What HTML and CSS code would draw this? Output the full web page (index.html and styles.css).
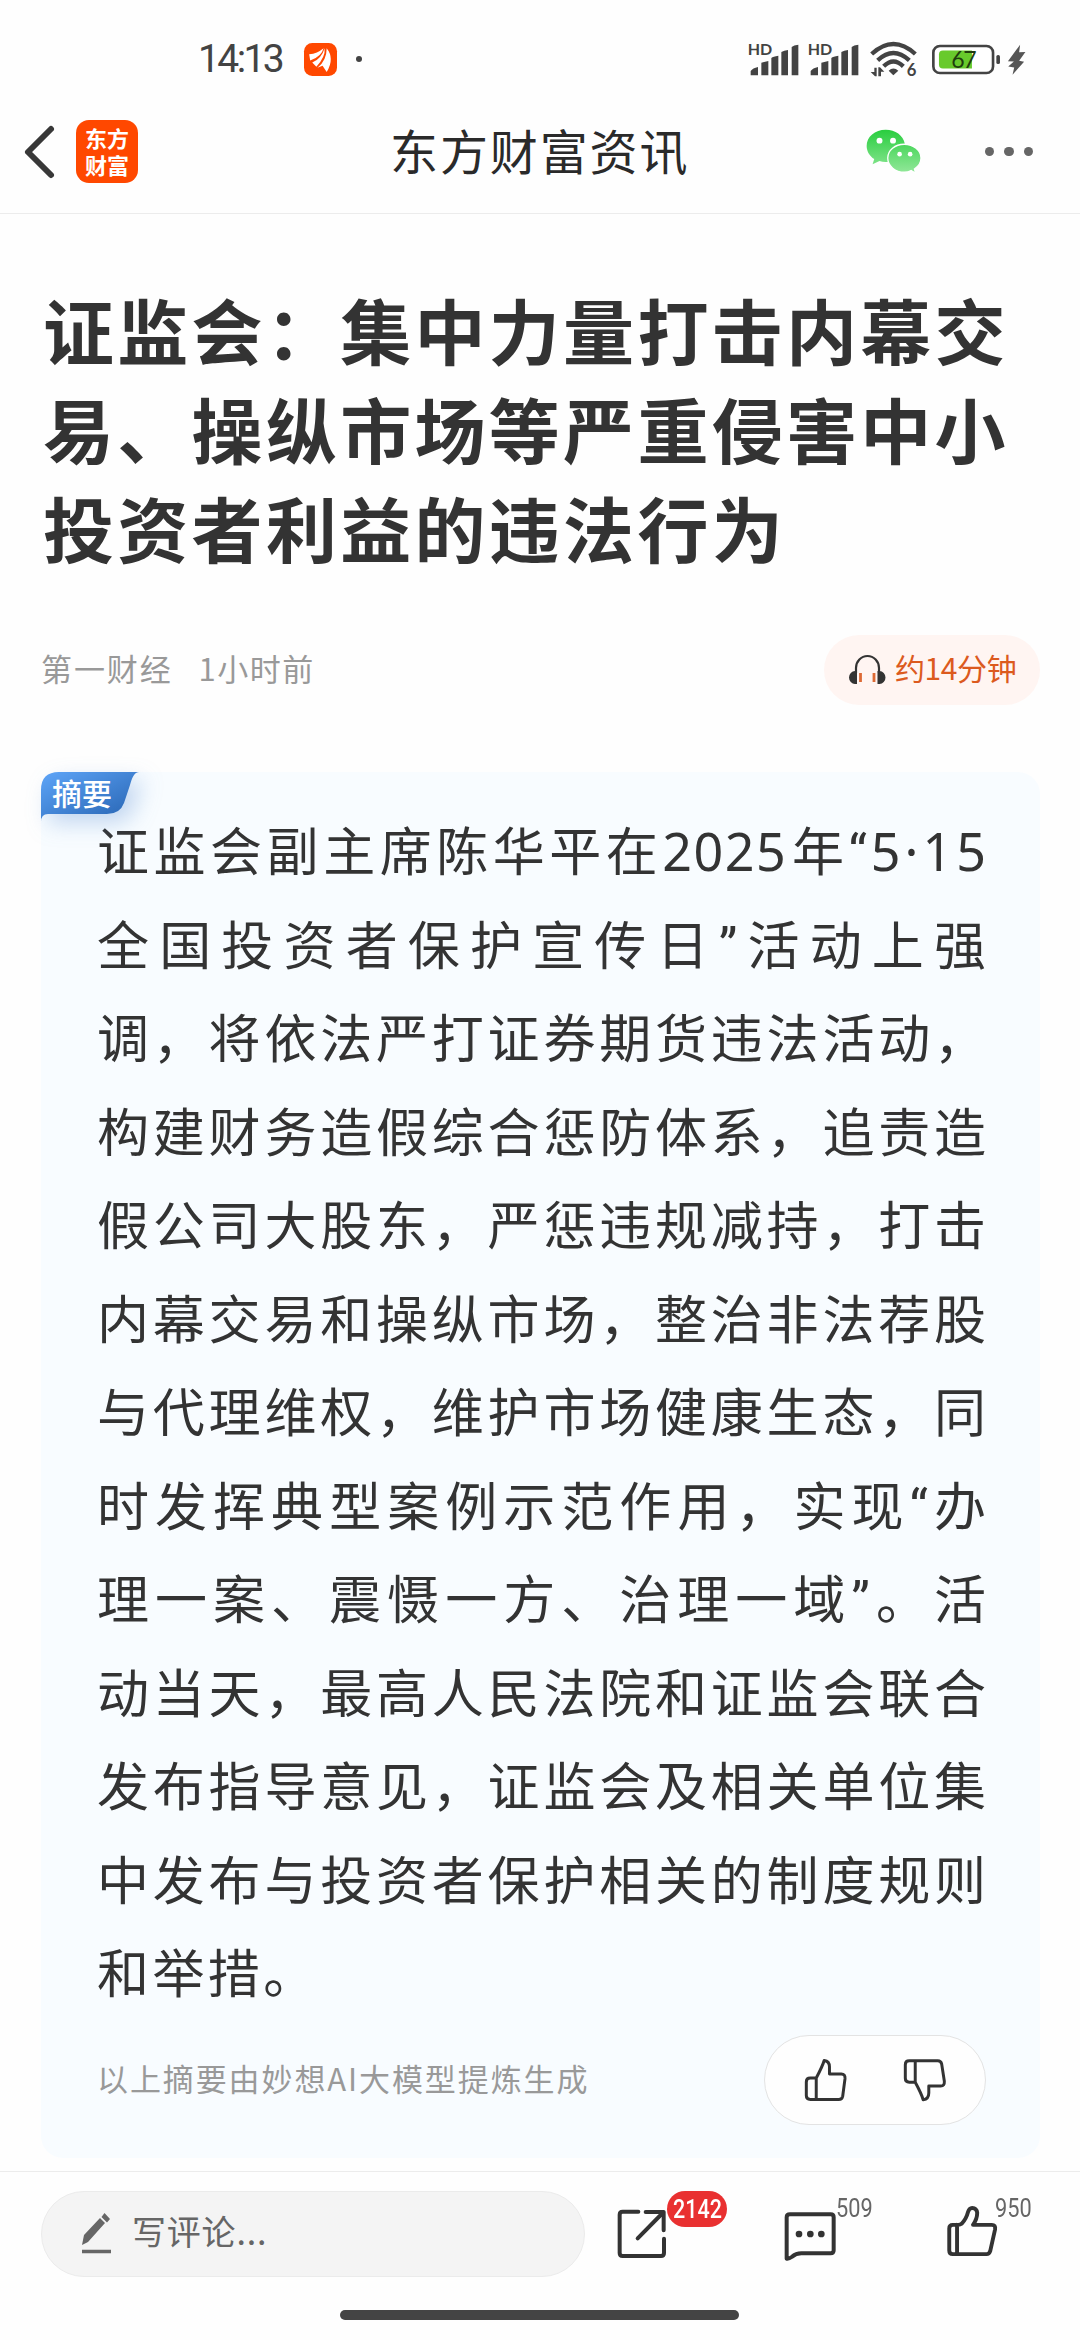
FILE: index.html
```
<!DOCTYPE html>
<html lang="zh-CN">
<head>
  <meta charset="UTF-8">
  <meta name="viewport" content="width=device-width, initial-scale=1.0">
  <title>东方财富资讯</title>
  <link rel="stylesheet" href="styles.css">
</head>
<body>
  <div class="status-bar">
    <span class="time">14:13</span>
    <svg class="app-icon" viewBox="0 0 32 32">
      <rect width="32" height="32" rx="8" fill="#ff4800"/>
      <path d="M5 11Q13 10 19 5Q17 13 6 17ZM20 5Q21 13 12 23L8 19Q17 15 20 5ZM22 5Q30 15 22 28L18 22L13 24Q22 17 22 5Z" fill="#fff"/>
    </svg>
    <span class="dot"></span>
    <div class="status-right">
      <svg class="signal" viewBox="80 65 155 105">
        <text x="79" y="105" class="hd">HD</text>
        <path d="M88 165V152Q94 143 110 140V165ZM120 165V127L141 122V165ZM150 165V113Q155 108 171 106V165ZM180 165V95Q188 90 200 89V165ZM211 165V80Q217 74 231 73V165Z"/>
      </svg>
      <svg class="signal" viewBox="80 65 155 105">
        <text x="79" y="105" class="hd">HD</text>
        <path d="M88 165V152Q94 143 110 140V165ZM120 165V127L141 122V165ZM150 165V113Q155 108 171 106V165ZM180 165V95Q188 90 200 89V165ZM211 165V80Q217 74 231 73V165Z"/>
      </svg>
      <svg class="wifi" viewBox="448 65 144 108">
        <g fill="none" stroke="#434343" stroke-width="13">
          <path d="M453 104Q518 44 584 104"/>
          <path d="M471 123Q518 79 566 123"/>
          <path d="M489 141Q518 112 548 141"/>
        </g>
        <path d="M504 154Q518 141 533 154L518 168Z"/>
        <path d="M461 145H468V171H463L450 158H461ZM473 171V144H478L491 157H481V171Z"/>
        <text x="558" y="171" class="wifi-num">6</text>
      </svg>
      <svg class="battery" viewBox="631 70 210 94">
        <rect x="637" y="76" width="181" height="82" rx="20" fill="#fff" stroke="#434343" stroke-width="8"/>
        <path d="M666 90H754V144H666Q654 144 654 132V102Q654 90 666 90Z" fill="#68ca2c"/>
        <rect x="828" y="103" width="11" height="28" rx="5"/>
        <text x="691" y="143" class="battery-num">67</text>
      </svg>
      <svg class="bolt" viewBox="860 70 56 94">
        <path d="M899 72L862 122L880 123L863 138L881 141L876 163L911 124L896 121L915 94L896 95Z" fill="#555"/>
      </svg>
    </div>
  </div>

  <header class="nav">
    <svg class="back" viewBox="0 0 30 52">
      <path d="M26 3L3 26L26 49" fill="none" stroke="#383838" stroke-width="6" stroke-linecap="round" stroke-linejoin="round"/>
    </svg>
    <div class="logo"><span>东方</span><span>财富</span></div>
    <h2 class="nav-title">东方财富资讯</h2>
    <svg class="wechat" viewBox="436 325 170 136">
      <defs>
        <linearGradient id="wx" x1="0" y1="325" x2="0" y2="460" gradientUnits="userSpaceOnUse">
          <stop offset="0" stop-color="#27cd3d"/>
          <stop offset="1" stop-color="#94e89b"/>
        </linearGradient>
      </defs>
      <path d="M496 327C463 327 438 349 438 376C438 392 447 407 461 416L456 432L477 422Q487 426 502 425L554 370C549 344 525 327 496 327Z" fill="url(#wx)"/>
      <path d="M552 371C524 371 502 389 502 413C502 437 525 456 552 456Q564 456 573 451L587 459L583 446C596 438 603 427 603 413C603 389 580 371 552 371Z" fill="url(#wx)" stroke="#fff" stroke-width="4"/>
      <g fill="#fff">
        <circle cx="477" cy="360" r="9"/><circle cx="518" cy="360" r="9"/>
        <circle cx="538" cy="401" r="7"/><circle cx="570" cy="401" r="7"/>
      </g>
    </svg>
    <div class="more"><i></i><i></i><i></i></div>
  </header>

  <main class="article">
    <h1 class="title">证监会：集中力量打击内幕交<br>易、操纵市场等严重侵害中小<br>投资者利益的违法行为</h1>

    <div class="meta">
      <span class="source">第一财经</span>
      <span class="ago">1小时前</span>
      <div class="listen">
        <svg class="headphone" viewBox="0 0 36 31">
          <path d="M7 19V14A11.5 12 0 0 1 30 14V19" fill="none" stroke="#333" stroke-width="2.2"/>
          <path d="M8 17V30H6A6 6.5 0 0 1 6 17ZM28.5 17V30H30.5A6 6.5 0 0 0 30.5 17Z" fill="#333"/>
          <path d="M11.5 19V28M25 19V28" stroke="#dd6a35" stroke-width="2.8"/>
        </svg>
        <span class="listen-text">约14分钟</span>
      </div>
    </div>

    <section class="summary">
      <div class="tag">
        <svg class="tag-bg" viewBox="0 0 98 50">
          <defs>
            <linearGradient id="tagFill" x1="0" y1="0" x2="1" y2="1">
              <stop offset="0" stop-color="#5ea5f8"/>
              <stop offset="1" stop-color="#2460ae"/>
            </linearGradient>
          </defs>
          <path d="M0 18Q0 0 18 0H98C92 1 91 7 89 13L83 31Q79 42 66 42H7Q0 42 0 50Z" fill="url(#tagFill)"/>
        </svg>
        <span class="tag-text">摘要</span>
      </div>
      <div class="summary-text">
        <p>证监会副主席陈华平在<span class="num">2025</span>年<span class="quote open">“</span><span class="num date">5·15</span></p>
        <p>全国投资者保护宣传日<span class="quote">”</span>活动上强</p>
        <p>调，将依法严打证券期货违法活动，</p>
        <p>构建财务造假综合惩防体系，追责造</p>
        <p>假公司大股东，严惩违规减持，打击</p>
        <p>内幕交易和操纵市场，整治非法荐股</p>
        <p>与代理维权，维护市场健康生态，同</p>
        <p>时发挥典型案例示范作用，实现<span class="quote">“</span>办</p>
        <p>理一案、震慑一方、治理一域<span class="quote">”</span>。活</p>
        <p>动当天，最高人民法院和证监会联合</p>
        <p>发布指导意见，证监会及相关单位集</p>
        <p>中发布与投资者保护相关的制度规则</p>
        <p class="last">和举措。</p>
      </div>
      <div class="summary-foot">
        <span class="note">以上摘要由妙想AI大模型提炼生成</span>
        <div class="vote">
          <svg class="vote-icon" viewBox="308 172 130 132">
            <path d="M345 232H327Q315 232 315 244V285Q315 297 327 297H413Q423 297 425 287L432 234Q433 220 421 220H385V198Q385 181 369 179Q364 196 345 232V297"/>
          </svg>
          <svg class="vote-icon" viewBox="605 176 130 132">
            <path d="M642 249H624Q612 249 612 237V196Q612 184 624 184H710Q720 184 722 194L730 246Q731 260 719 260H683V281Q683 299 666 302Q661 284 642 249V184"/>
          </svg>
        </div>
      </div>
    </section>
  </main>

  <footer class="toolbar">
    <div class="comment-input">
      <svg class="pencil" viewBox="0 0 30 42">
        <path d="M0 32L2 22L18 5L23 10L6 29ZM19.500 4L22.500 0L28 6L25 9.500Z" fill="#666"/>
        <path d="M0 38.500H29" stroke="#666" stroke-width="3.500"/>
      </svg>
      <span class="placeholder">写评论...</span>
    </div>
    <div class="action share">
      <svg viewBox="110 140 150 156">
        <path d="M174 154H127Q118 154 118 163V278Q118 287 127 287H242Q251 287 251 278V235M196 155H250V210M250 155L172 234"/>
      </svg>
      <span class="badge"><span class="badge-num">2142</span></span>
    </div>
    <div class="action comments">
      <svg viewBox="610 146 156 156">
        <path d="M628 162H750Q759 162 759 171V270Q759 279 750 279H662Q646 279 633 290Q625 296 618 295V171Q618 162 628 162Z"/>
        <g class="dots"><circle cx="655" cy="221" r="10"/><circle cx="689" cy="221" r="10"/><circle cx="722" cy="221" r="10"/></g>
      </svg>
      <span class="count">509</span>
    </div>
    <div class="action like">
      <svg viewBox="1096 136 156 160">
        <path d="M1128 197H1115Q1104 197 1104 208V276Q1104 287 1115 287H1219Q1227 287 1230 278L1245 211Q1247 197 1235 197H1177Q1190 180 1190 160Q1188 145 1175 145Q1165 146 1162 157Q1156 180 1142 194Q1137 198 1128 197V287"/>
      </svg>
      <span class="count">950</span>
    </div>
  </footer>
  <div class="home-bar"></div>
</body>
</html>
```
FILE: styles.css
```
* {
  box-sizing: border-box;
}

body {
  margin: 0;
  width: 1080px;
  height: 2340px;
  overflow: hidden;
  background: #fefefe;
  color: #333;
  font-family: "Noto Sans CJK SC", "Noto Sans", sans-serif;
  display: flex;
  flex-direction: column;
}

svg {
  display: block;
  flex: none;
  overflow: visible;
}

/* status bar */
.status-bar {
  height: 118px;
  padding: 0 54px 0 198px;
  display: flex;
  align-items: center;
  fill: #434343;
}

.time {
  width: 106px;
  font-family: Roboto, sans-serif;
  font-size: 39px;
  letter-spacing: -2.6px;
  color: #434343;
}

.app-icon {
  width: 33px;
  height: 33px;
}

.dot {
  width: 6px;
  height: 6px;
  margin-left: 19px;
  border-radius: 50%;
  background: #434343;
}

.status-right {
  margin-left: auto;
  display: flex;
  align-items: center;
}

.signal {
  width: 51.700px;
  height: 35px;
  margin-right: 8.300px;
}

.hd {
  font: 700 48px Lato, sans-serif;
}

.wifi {
  width: 48px;
  height: 36px;
  margin-left: 2px;
}

.wifi-num {
  font: 700 50px Lato, sans-serif;
}

.battery {
  width: 70px;
  height: 31px;
  margin-left: 13px;
}

.battery-num {
  font: 400 70px Lato, sans-serif;
  letter-spacing: -4px;
  fill: #1f3d0d;
}

.bolt {
  width: 19px;
  height: 31px;
  margin-left: 6px;
}

/* top navigation */
.nav {
  height: 96px;
  padding: 0 47px 28px 25px;
  display: flex;
  align-items: center;
  border-bottom: 1px solid #ececec;
}

.back {
  width: 30px;
  height: 52px;
}

.logo {
  width: 62px;
  height: 63px;
  margin-left: 21px;
  padding-bottom: 2px;
  border-radius: 13px;
  background: #ff4800;
  color: #fff;
  font-size: 22px;
  font-weight: 700;
  line-height: 27px;
  display: flex;
  flex-direction: column;
  align-items: center;
  justify-content: center;
}

.nav-title {
  flex: none;
  margin: 0 0 0 252px;
  width: 476px;
  padding-bottom: 5px;
  font-size: 48px;
  font-weight: 400;
  letter-spacing: 1.900px;
  line-height: 60px;
  color: #2a2a2a;
}

.wechat {
  width: 56px;
  height: 45px;
}

.more {
  margin-left: auto;
  display: flex;
  gap: 10px;
}

.more i {
  width: 9.300px;
  height: 9.300px;
  border-radius: 50%;
  background: #666;
}

/* article */
.article {
  height: 1957px;
  padding: 65px 40px 0 41px;
}

.title {
  margin: 0;
  padding-left: 2px;
  font-size: 71px;
  font-weight: 700;
  line-height: 99px;
  letter-spacing: 3.300px;
  white-space: nowrap;
}

.meta {
  height: 69px;
  margin-top: 59px;
  display: flex;
  align-items: center;
  font-size: 31px;
  letter-spacing: 1.900px;
  color: #999;
}

.source,
.ago {
  padding-bottom: 5px;
}

.ago {
  margin-left: 26px;
  letter-spacing: 1.500px;
}

.listen {
  margin-left: auto;
  width: 216px;
  height: 70px;
  padding-left: 25px;
  border-radius: 36px;
  background: #fff5f2;
  color: #dc5a1e;
  font-size: 30px;
  letter-spacing: -0.400px;
  display: flex;
  align-items: center;
  gap: 10px;
}

.listen-text {
  padding-bottom: 5px;
}

.headphone {
  width: 36px;
  height: 31px;
}

.summary {
  position: relative;
  height: 1386px;
  margin-top: 68px;
  padding: 30px 54px 0 56px;
  border-radius: 22px;
  background: #f8fcff;
}

.tag {
  position: absolute;
  left: 0;
  top: 0;
  width: 98px;
  height: 50px;
}

.tag-bg {
  width: 98px;
  height: 50px;
  filter: drop-shadow(8px 9px 11px rgba(70, 130, 205, 0.3));
}

.tag-text {
  position: absolute;
  left: 11px;
  top: 0;
  line-height: 40px;
  font-size: 30px;
  font-weight: 500;
  color: #fff;
}

.summary-text p {
  margin: 0;
  height: 93.500px;
  font-size: 52px;
  line-height: 93.500px;
  white-space: nowrap;
  text-align: justify;
  text-align-last: justify;
  text-justify: inter-character;
}

.summary-text .last {
  text-align-last: left;
  letter-spacing: 3.400px;
}

.num {
  font-family: "Noto Sans", sans-serif;
  letter-spacing: 1.500px;
}

.date {
  letter-spacing: 4px;
  margin-right: -4px;
}

.quote {
  font-family: Roboto, sans-serif;
}

.open {
  margin-right: 4px;
}

.summary-foot {
  height: 90px;
  margin-top: 17px;
  display: flex;
  align-items: center;
  justify-content: space-between;
}

.note {
  padding-bottom: 5px;
  font-size: 31px;
  letter-spacing: 1.900px;
  color: #999;
}

.vote {
  width: 222px;
  height: 90px;
  border: 1px solid #e3e3e3;
  border-radius: 45px;
  background: #fefefe;
  display: flex;
  align-items: center;
  justify-content: center;
  gap: 56px;
}

.vote-icon {
  width: 43px;
  height: 44px;
  fill: none;
  stroke: #333;
  stroke-width: 9;
  stroke-linejoin: round;
}

/* bottom toolbar */
.toolbar {
  height: 139px;
  padding: 19px 40px 0 41px;
  border-top: 1px solid #ececec;
  display: flex;
  align-items: flex-start;
}

.comment-input {
  width: 544px;
  height: 86px;
  padding-left: 40px;
  border: 1px solid #ebebeb;
  border-radius: 43px;
  background: #f4f4f4;
  color: #666;
  font-size: 34px;
  letter-spacing: 0.800px;
  display: flex;
  align-items: center;
  gap: 20px;
}

.placeholder {
  padding-bottom: 7px;
}

.pencil {
  width: 30px;
  height: 42px;
}

.action {
  position: relative;
}

.action svg {
  width: 52px;
  height: 52px;
  fill: none;
  stroke: #333;
  stroke-width: 12;
  stroke-linecap: round;
  stroke-linejoin: round;
}

.action .dots {
  fill: #333;
  stroke: none;
}

.share {
  margin: 16px 0 0 31px;
}

.comments {
  margin: 18px 0 0 116px;
}

.like {
  margin: 14px 0 0 110px;
}

.badge {
  position: absolute;
  left: 51px;
  top: -16px;
  width: 60px;
  height: 36px;
  border-radius: 18px;
  background: #e93030;
  color: #fff;
  font: 500 25px/37px Roboto, sans-serif;
  display: flex;
  justify-content: center;
}

.badge-num {
  transform: scaleX(0.86);
}

.count {
  position: absolute;
  left: 52px;
  top: -15px;
  color: #666;
  font: 400 25px/30px Roboto, sans-serif;
  transform: scaleX(0.87);
  transform-origin: left;
}

.like .count {
  left: 49px;
  top: -11px;
}

.home-bar {
  width: 399px;
  height: 10px;
  margin-left: 340px;
  border-radius: 5px;
  background: #444;
}
```
